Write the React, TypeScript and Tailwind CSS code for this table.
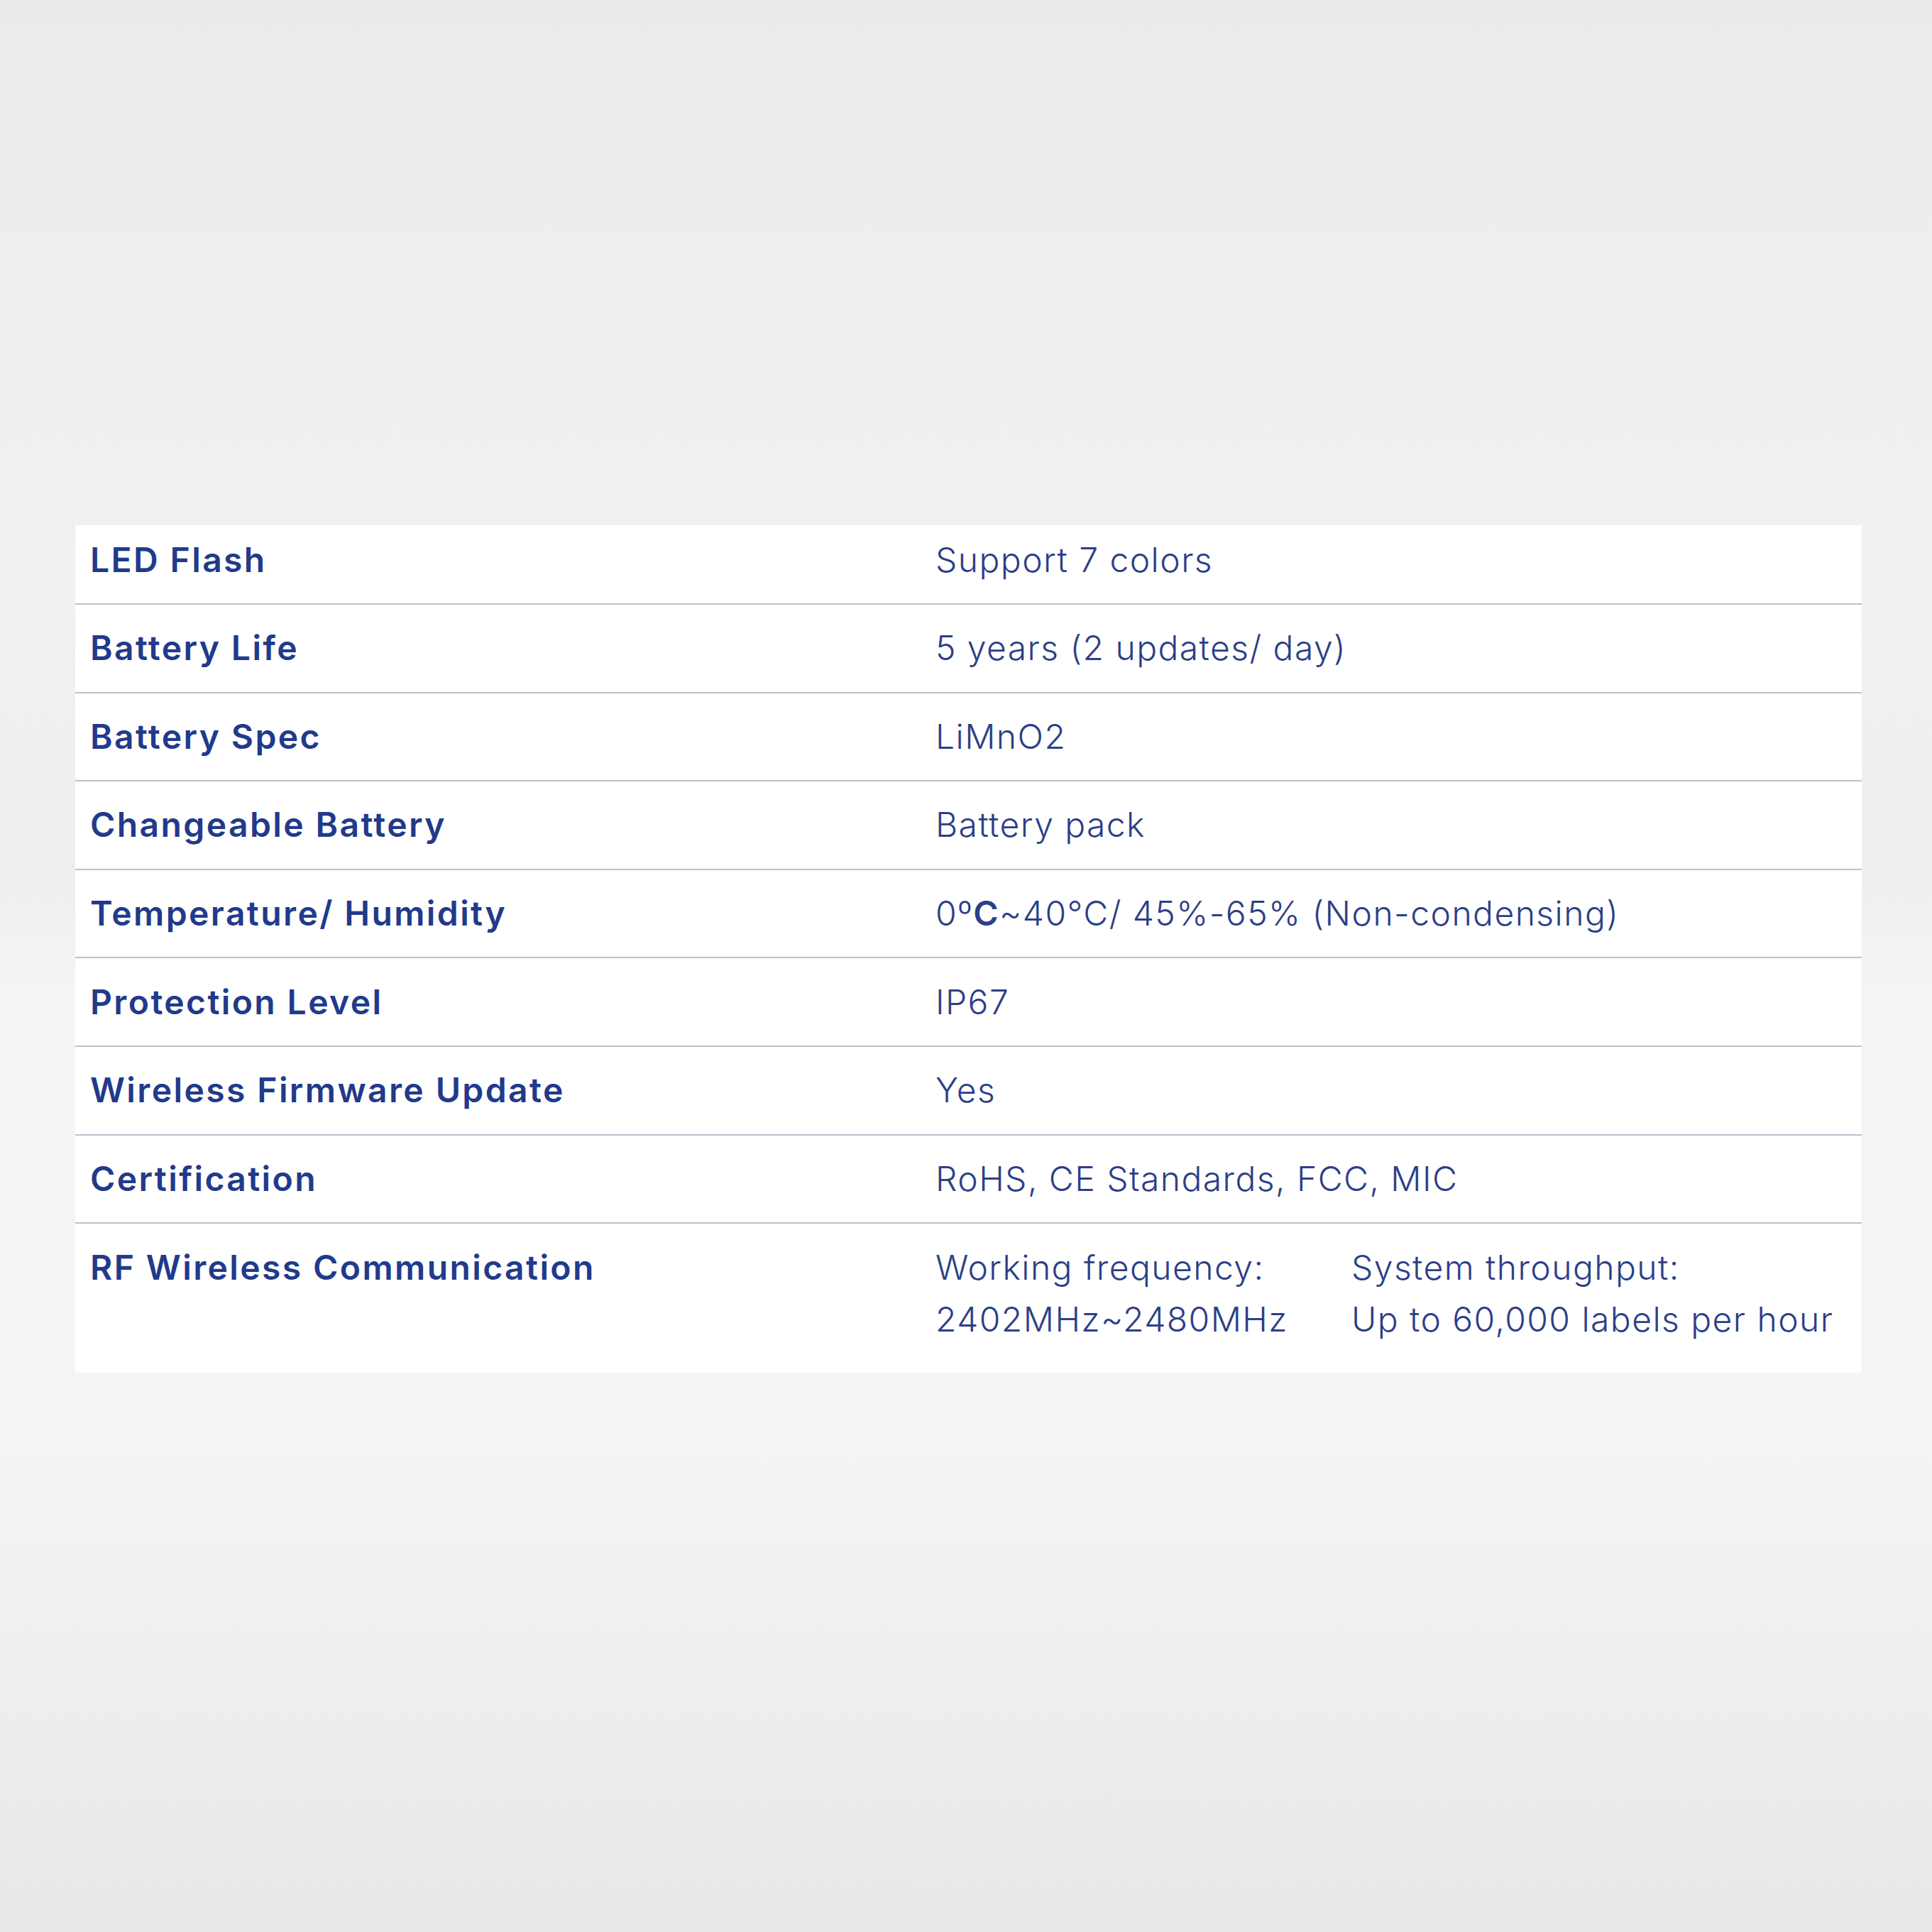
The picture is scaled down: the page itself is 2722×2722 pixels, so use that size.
import React from 'react';

type Spec = {
  label: string;
  value: React.ReactNode;
};

const specs: Spec[] = [
  { label: 'LED Flash', value: 'Support 7 colors' },
  { label: 'Battery Life', value: '5 years (2 updates/ day)' },
  { label: 'Battery Spec', value: 'LiMnO2' },
  { label: 'Changeable Battery', value: 'Battery pack' },
  {
    label: 'Temperature/ Humidity',
    value: (
      <>
        0º<span className="font-semibold">C</span>~40°C/ 45%-65% (Non-condensing)
      </>
    ),
  },
  { label: 'Protection Level', value: 'IP67' },
  { label: 'Wireless Firmware Update', value: 'Yes' },
  { label: 'Certification', value: 'RoHS, CE Standards, FCC, MIC' },
];

const labelCls = "pl-[21px] text-[48px] font-semibold tracking-[0.05em] text-[#213a8b] [font-family:Inter,'Noto_Sans',sans-serif]";
const valueCls = "text-[48px] font-light tracking-[0.03em] text-[#2c3f88] [font-family:Inter,'Noto_Sans',sans-serif]";

export default function App() {
  return (
    <div className="w-[2722px] h-[2722px] overflow-hidden bg-[linear-gradient(180deg,#ebebec_0%,#f1f1f1_30%,#eeeeee_45%,#f5f5f5_52%,#f4f4f4_75%,#e8e8e8_100%)] pt-[740px]">
      <div className="ml-[106px] w-[2517px] bg-white">
        {specs.map((s, i) => (
          <div
            key={s.label}
            className={
              i === 0
                ? 'grid grid-cols-[1212px_1fr] items-center h-[112px] pb-[12px] border-b-2 border-[#b6c3cf]'
                : 'grid grid-cols-[1212px_1fr] items-center h-[124.6px] border-b-2 border-[#b6c3cf]'
            }
          >
            <div className={labelCls}>{s.label}</div>
            <div className={valueCls}>{s.value}</div>
          </div>
        ))}
        <div className="grid grid-cols-[1212px_1fr] items-start h-[210px] pt-[25px] leading-[73px]">
          <div className={labelCls}>RF Wireless Communication</div>
          <div className={`${valueCls} grid grid-cols-[586px_1fr]`}>
            <div>
              <div>Working frequency:</div>
              <div>2402MHz~2480MHz</div>
            </div>
            <div>
              <div>System throughput:</div>
              <div>Up to 60,000 labels per hour</div>
            </div>
          </div>
        </div>
      </div>
    </div>
  );
}
